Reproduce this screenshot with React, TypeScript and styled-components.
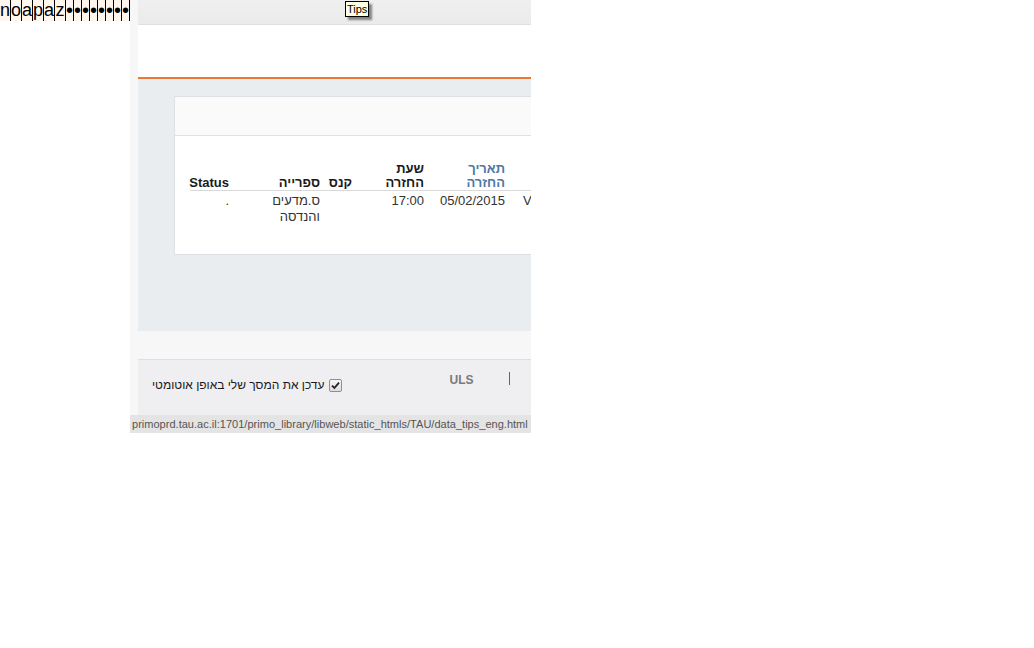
import React from "react";
import styled, { createGlobalStyle } from "styled-components";

const Global = createGlobalStyle`
  html, body { margin: 0; padding: 0; background: #ffffff; }
  body { font-family: "Liberation Sans", "DejaVu Sans", Arial, sans-serif; }
`;

const Page = styled.div`
  display: flex;
  flex-direction: column;
  width: 1034px;
`;

const Upper = styled.div`
  display: flex;
  height: 415px;
`;

const LeftCol = styled.div`
  width: 130px;
  flex: none;
  background: #ffffff;
`;

const CharStrip = styled.div`
  display: flex;
  height: 21px;
  background: #fff7ee;
  overflow: hidden;
`;

const CharCell = styled.span<{ $w: number }>`
  width: ${(p) => p.$w}px;
  flex: none;
  border-right: 1px solid #000;
  box-sizing: border-box;
  display: flex;
  justify-content: center;
  align-items: center;
  font-size: 18px;
  line-height: 21px;
  color: #000;
  overflow: visible;
`;

const DotCell = styled(CharCell)`
  font-size: 20px;
`;

const Gutter = styled.div`
  width: 8px;
  flex: none;
  background: #f7f7f7;
`;

const Main = styled.div`
  width: 393px;
  flex: none;
  display: flex;
  flex-direction: column;
  overflow: hidden;
`;

const TopBar = styled.div`
  position: relative;
  height: 24px;
  flex: none;
  background: linear-gradient(#efefef, #ebebeb);
  border-bottom: 1px solid #e0e0e0;
`;

const Tooltip = styled.span`
  position: absolute;
  left: 207px;
  top: 1px;
  padding: 0 1px;
  height: 14px;
  line-height: 14px;
  font-size: 11px;
  color: #000;
  background: #ffffe1;
  border: 1px solid #000;
  box-shadow: 3px 3px 2px rgba(0, 0, 0, 0.45);
`;

const WhiteBand = styled.div`
  height: 52px;
  flex: none;
  background: #ffffff;
`;

const Accent = styled.div`
  height: 2px;
  flex: none;
  background: #ee7733;
`;

const Content = styled.div`
  height: 252px;
  flex: none;
  background: #eaedf0;
  padding: 17px 0 0 36px;
  box-sizing: border-box;
`;

const Card = styled.div`
  width: 460px;
  height: 159px;
  box-sizing: border-box;
  border: 1px solid #dde1e5;
  background: #ffffff;
  display: flex;
  flex-direction: column;
`;

const CardHead = styled.div`
  height: 38px;
  flex: none;
  background: #fafafa;
  border-bottom: 1px solid #dfe2e5;
`;

const CardBody = styled.div`
  flex: 1;
  padding: 26px 0 0 15px;
`;

const Row = styled.div`
  direction: rtl;
  display: grid;
  grid-template-columns: 100px 81px 72px 32px 91px 40px;
  width: 416px;
`;

const HeadRow = styled(Row)`
  align-items: end;
  border-bottom: 1px solid #d9d9d9;
`;

const DataRow = styled(Row)`
  padding-top: 2px;
`;

const HeadCell = styled.div<{ $link?: boolean }>`
  text-align: right;
  padding: 0 1px 0 0;
  font-size: 13px;
  font-weight: bold;
  line-height: 14px;
  color: ${(p) => (p.$link ? "#4f78a6" : "#1a1a1a")};
`;

const DataCell = styled.div<{ $ltr?: boolean }>`
  text-align: ${(p) => (p.$ltr ? "left" : "right")};
  padding: ${(p) => (p.$ltr ? "0 0 0 17px" : "0 1px 0 0")};
  font-size: 13px;
  line-height: 16px;
  color: #333333;
`;

const Strip = styled.div`
  height: 28px;
  flex: none;
  background: #f7f7f7;
`;

const Footer = styled.div`
  flex: 1;
  background: #efeef1;
  border-top: 1px solid #dfdfe2;
  display: flex;
  align-items: flex-start;
  padding-left: 14px;
`;

const AutoRefresh = styled.label`
  display: flex;
  align-items: center;
  gap: 4px;
  margin-top: 17px;
  font-size: 12px;
  line-height: 16px;
  color: #1a1a1a;
  direction: ltr;
`;

const CheckBox = styled.span`
  width: 11px;
  height: 11px;
  border: 1px solid #8e8f8f;
  border-radius: 2px;
  background: linear-gradient(#f6f6f6, #dedede);
  display: flex;
  align-items: center;
  justify-content: center;
`;

const Brand = styled.span`
  margin: 13px 0 0 108px;
  font-size: 12px;
  font-weight: bold;
  line-height: 14px;
  color: #7a7a7a;
`;

const Divider = styled.span`
  margin: 12px 0 0 35px;
  width: 0;
  height: 13px;
  border-left: 1px solid #666666;
`;

const StatusBar = styled.div`
  margin-left: 130px;
  width: 401px;
  height: 18px;
  background: #e4e4e4;
  padding-left: 2px;
  box-sizing: border-box;
  font-size: 11px;
  letter-spacing: 0.02px;
  line-height: 18px;
  color: #555555;
  white-space: nowrap;
  overflow: hidden;
`;

const letters = ["n", "o", "a", "p", "a", "z"];
const dots = [0, 1, 2, 3, 4, 5, 6, 7];

export default function App() {
  return (
    <Page>
      <Global />
      <Upper>
        <LeftCol>
          <CharStrip>
            {letters.map((c, i) => (
              <CharCell key={i} $w={11}>
                {c}
              </CharCell>
            ))}
            {dots.map((d) => (
              <DotCell key={d} $w={8}>
                •
              </DotCell>
            ))}
          </CharStrip>
        </LeftCol>
        <Gutter />
        <Main>
          <TopBar>
            <Tooltip>Tips</Tooltip>
          </TopBar>
          <WhiteBand />
          <Accent />
          <Content>
            <Card>
              <CardHead />
              <CardBody>
                <HeadRow>
                  <HeadCell />
                  <HeadCell $link>
                    תאריך
                    <br />
                    החזרה
                  </HeadCell>
                  <HeadCell>
                    שעת
                    <br />
                    החזרה
                  </HeadCell>
                  <HeadCell>קנס</HeadCell>
                  <HeadCell>ספרייה</HeadCell>
                  <HeadCell>Status</HeadCell>
                </HeadRow>
                <DataRow>
                  <DataCell $ltr>V</DataCell>
                  <DataCell>05/02/2015</DataCell>
                  <DataCell>17:00</DataCell>
                  <DataCell />
                  <DataCell>
                    ס.מדעים
                    <br />
                    והנדסה
                  </DataCell>
                  <DataCell>.</DataCell>
                </DataRow>
              </CardBody>
            </Card>
          </Content>
          <Strip />
          <Footer>
            <AutoRefresh>
              <span dir="rtl">עדכן את המסך שלי באופן אוטומטי</span>
              <CheckBox>
                <svg width="9" height="9" viewBox="0 0 9 9">
                  <path d="M1 4.6 L3.4 7 L8 1.6" stroke="#222" strokeWidth="1.8" fill="none" />
                </svg>
              </CheckBox>
            </AutoRefresh>
            <Brand>ULS</Brand>
            <Divider />
          </Footer>
        </Main>
      </Upper>
      <StatusBar>primoprd.tau.ac.il:1701/primo_library/libweb/static_htmls/TAU/data_tips_eng.html</StatusBar>
    </Page>
  );
}
